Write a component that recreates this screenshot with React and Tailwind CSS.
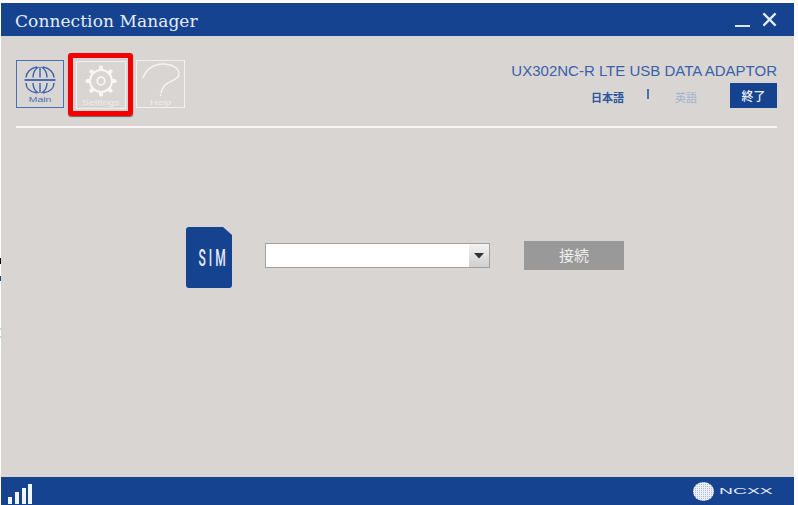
function Globe() {
  return (
    <svg width="32" height="28" viewBox="0 0 32 28" fill="none" stroke="#3a62ad" strokeWidth="1.4">
      <path d="M13 1 C 6 2 2 7 2 11.5" />
      <path d="M14.5 1 C 11 3 9 7 9 11.5" />
      <path d="M16 1 V11.5" />
      <path d="M17.5 1 C 21 3 23 7 23 11.5" />
      <path d="M19 1 C 26 2 30 7 30 11.5" />
      <path d="M13 27 C 6 26 2 22 2 17" />
      <path d="M14.5 27 C 11 25 9 22 9 17" />
      <path d="M16 27 V17" />
      <path d="M17.5 27 C 21 25 23 22 23 17" />
      <path d="M19 27 C 26 26 30 22 30 17" />
      <path d="M0.5 14 H31.5" strokeWidth="1.8" />
    </svg>
  );
}
function Gear() {
  const teeth = [0, 45, 90, 135, 180, 225, 270, 315];
  return (
    <svg width="32" height="32" viewBox="0 0 32 32" fill="none">
      {teeth.map((a) => (
        <rect key={a} x="14" y="0.5" width="4" height="5" rx="1.6" fill="#f8f7f6" transform={`rotate(${a} 16 16)`} />
      ))}
      <circle cx="16" cy="16" r="11" stroke="#f8f7f6" strokeWidth="2" />
      <circle cx="16" cy="16" r="3.8" stroke="#f8f7f6" strokeWidth="1.8" />
    </svg>
  );
}
function Question() {
  return (
    <svg width="38" height="33" viewBox="0 0 38 33" fill="none" stroke="#f6f5f3" strokeWidth="1.4">
      <path d="M1 15 C 4 6 12 1 21 1 C 30 1 37 5 37 11 C 37 16 30 17 26 20 C 22 22 20 25 19 30" />
      <circle cx="18.5" cy="32" r="0.9" fill="#f6f5f3" stroke="none" />
    </svg>
  );
}
function Sim() {
  return (
    <div className="relative w-[46px] h-[61px]">
      <svg width="46" height="61" viewBox="0 0 46 61" className="block">
        <path d="M3 0 H37 L46 8 V58 a3 3 0 0 1 -3 3 H3 a3 3 0 0 1 -3 -3 V3 a3 3 0 0 1 3 -3 Z" fill="#15438f" />
      </svg>
      <span className="absolute left-0 right-0 top-[18px] pl-[2px] text-center text-[24px] leading-[26px] font-medium tracking-[6px] text-[#e4e8f1] font-['Roboto',sans-serif] scale-x-[0.5]">SIM</span>
    </div>
  );
}
function Logo() {
  return (
    <div className="flex items-center gap-[5px]">
      <svg width="21" height="19" viewBox="0 0 21 19">
        <defs>
          <pattern id="dots" width="2" height="2" patternUnits="userSpaceOnUse">
            <rect width="2" height="2" fill="#eef2f8" />
            <rect width="1" height="1" fill="#a9bcdc" />
          </pattern>
        </defs>
        <ellipse cx="10.5" cy="9.5" rx="10.5" ry="9.5" fill="url(#dots)" />
      </svg>
      <span className="block w-[54px] text-[9px] leading-none text-[#e2e8f3] font-['Liberation_Sans',sans-serif] scale-x-[2.15] origin-left">NCXX</span>
    </div>
  );
}
function App() {
  return (
    <div className="relative w-[798px] h-[505px] bg-white overflow-hidden">
      <div className="absolute left-0 top-[258px] w-px h-[6px] bg-black" />
      <div className="absolute left-0 top-[276px] w-px h-[5px] bg-[#15438f]" />
      <div className="absolute left-0 top-[328px] w-px h-[2px] bg-[#a8dcf5]" />
      <div className="absolute left-0 top-[336px] w-px h-[2px] bg-[#a8dcf5]" />
      <div className="ml-px pt-[3px] w-[793px] h-[505px] flex flex-col">
        <div className="h-[33px] shrink-0 bg-[#15438f] flex items-center justify-between pl-[14px] pr-[17px]">
          <span className="pt-[3px] text-[17px] leading-[20px] text-[#e6ecf5] font-['DejaVu_Serif',serif] tracking-[0.08px]">Connection Manager</span>
          <div className="flex items-center gap-[12px]">
            <div className="w-[15px] h-[2px] bg-[#dfe5f0] mt-[13px]" />
            <svg width="15" height="15" viewBox="0 0 16 16" stroke="#e6ebf4" strokeWidth="2.4"><path d="M1.5 1.5 L14.5 14.5 M14.5 1.5 L1.5 14.5" /></svg>
          </div>
        </div>
        <div className="flex-1 bg-[#d8d5d2] flex flex-col">
          <div className="h-[92px] shrink-0 ml-[15px] mr-[17px] flex justify-between border-b-2 border-[#f7f6f5]">
            <div className="flex items-start pt-[24px]">
              <div className="w-[48px] h-[48px] border border-[#4a70b4] flex flex-col items-center pt-[5px]">
                <Globe />
                <span className="text-[6.5px] leading-[8px] mt-[2px] text-[#4a70b4] font-['Liberation_Sans',sans-serif] scale-x-[1.6]">Main</span>
              </div>
              <div className="ml-[4px] -mt-[7px] w-[65px] h-[63px] border-[5px] border-[#f50000] rounded-[3px] flex items-center justify-center shadow-[0_1px_1px_#666]">
                <div className="w-[50px] h-[48px] border border-[#efeeec] flex flex-col items-center pt-[3px]">
                  <Gear />
                  <span className="text-[6.5px] leading-[8px] mt-[2px] text-[#eeedeb] font-['Liberation_Sans',sans-serif] scale-x-[1.6]">Settings</span>
                </div>
              </div>
              <div className="ml-[3px] w-[49px] h-[48px] border border-[#f2f1ef] flex flex-col items-center pt-[2px]">
                <Question />
                <span className="text-[6.5px] leading-[8px] mt-[3px] text-[#eeedeb] font-['Liberation_Sans',sans-serif] scale-x-[1.6]">Help</span>
              </div>
            </div>
            <div className="flex flex-col items-end pt-[25px]">
              <span className="text-[15px] leading-[20px] text-[#3b5fa9] font-['Liberation_Sans',sans-serif]">UX302NC-R LTE USB DATA ADAPTOR</span>
              <div className="flex items-center mt-[2px] font-['Noto_Sans_CJK_JP',sans-serif]">
                <span className="mt-[3px] text-[11px] leading-[14px] font-bold text-[#2c55a0] w-[33px]">日本語</span>
                <span className="ml-[23px] w-[2px] h-[10px] -mt-[3px] bg-[#4a6eb0]" />
                <span className="ml-[26px] mt-[3px] text-[11px] leading-[14px] text-[#9fb2d3] w-[23px]">英語</span>
                <div className="ml-[32px] w-[47px] h-[25px] bg-[#15438f] flex items-center justify-center text-[12px] font-medium text-[#eef1f6]">終了</div>
              </div>
            </div>
          </div>
          <div className="flex items-start pl-[185px] pt-[99px]">
            <Sim />
            <div className="ml-[33px] mt-[16px] w-[225px] h-[25px] bg-white border border-[#a3a19f] flex justify-end">
              <div className="w-[20px] h-full bg-gradient-to-b from-[#f4f4f4] to-[#cfcfcf] flex items-center justify-center">
                <svg width="10" height="6" viewBox="0 0 10 6"><path d="M0 0 H10 L5 5.5 Z" fill="#333" /></svg>
              </div>
            </div>
            <div className="ml-[34px] mt-[14px] w-[100px] h-[29px] bg-[#999999] flex items-center justify-center text-[15px] text-[#eeeeee] font-['Noto_Sans_CJK_JP',sans-serif]">接続</div>
          </div>
        </div>
        <div className="h-[28px] shrink-0 bg-[#15438f] flex items-end justify-between pl-[7px] pr-[21px]">
          <div className="flex items-end gap-[3px] mb-px">
            <div className="w-[4px] h-[7px] bg-[#f2f5fa]" />
            <div className="w-[4px] h-[12px] bg-[#f2f5fa]" />
            <div className="w-[4px] h-[16px] bg-[#f2f5fa]" />
            <div className="w-[4px] h-[20px] bg-[#f2f5fa] -ml-px" />
          </div>
          <div className="self-center"><Logo /></div>
        </div>
      </div>
    </div>
  );
}
export default App;
